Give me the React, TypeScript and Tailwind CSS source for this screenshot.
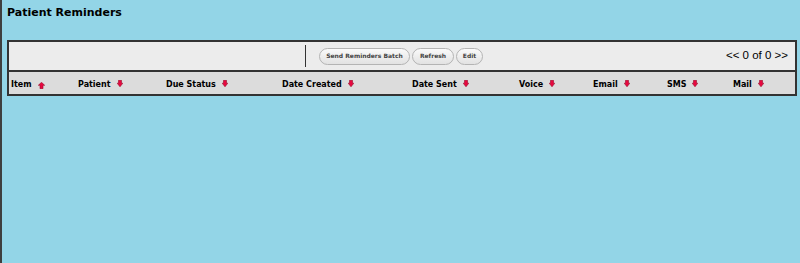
import React from 'react';

const columns = [
  { label: 'Item', width: 'w-[67px]', up: true },
  { label: 'Patient', width: 'w-[88px]' },
  { label: 'Due Status', width: 'w-[116px]' },
  { label: 'Date Created', width: 'w-[130px]' },
  { label: 'Date Sent', width: 'w-[107px]' },
  { label: 'Voice', width: 'w-[74px]' },
  { label: 'Email', width: 'w-[74px]' },
  { label: 'SMS', width: 'w-[66px]' },
  { label: 'Mail', width: 'w-[56px]' },
];

function SortArrow({ up }: { up?: boolean }) {
  if (up) {
    return (
      <svg width="7" height="7" viewBox="0 0 7 7" className="ml-[6px] mt-[2px] shrink-0">
        <polygon points="3.5,0.3 6.7,3.3 5,3.3 5,6.7 2,6.7 2,3.3 0.3,3.3" fill="#e8073f" stroke="#9a0b2b" strokeWidth="0.6" />
      </svg>
    );
  }
  return (
    <svg width="6" height="7" viewBox="0 0 6 7" className="ml-[6px] shrink-0">
      <polygon points="1.5,0.3 4.5,0.3 4.5,3.2 5.8,3.2 3,6.8 0.2,3.2 1.5,3.2" fill="#e8073f" stroke="#9a0b2b" strokeWidth="0.6" />
    </svg>
  );
}

function PillButton({ label, width }: { label: string; width: string }) {
  return (
    <button
      className={`${width} h-[17px] rounded-full border border-[#b4b4b4] bg-gradient-to-b from-[#fafafa] to-[#e2e2e2] text-[6px] font-bold text-[#444] leading-none`}
    >
      {label}
    </button>
  );
}

export default function App() {
  return (
    <div className="min-h-screen bg-[#93d5e7] border-l-2 border-[#3f3f3f] pl-[5px] font-['DejaVu_Sans',sans-serif]">
      {/* Title */}
      <div className="h-[40px] pt-[6px]">
        <h1 className="text-[11px] leading-[13px] font-bold text-black">Patient Reminders</h1>
      </div>

      <div className="w-[790px] border-2 border-[#333]">
        {/* Toolbar */}
        <div className="h-[28px] bg-[#ececec] flex items-center">
          <div className="w-[296px]" />
          <div className="w-px h-[22px] bg-[#333]" />
          <div className="ml-[13px] flex items-center gap-[2px]">
            <PillButton label="Send Reminders Batch" width="w-[91px]" />
            <PillButton label="Refresh" width="w-[42px]" />
            <PillButton label="Edit" width="w-[27px]" />
          </div>
          <div className="ml-auto pr-[7px] text-[11.5px] text-black font-['Liberation_Sans',Arial,sans-serif]">
            &lt;&lt; 0 of 0 &gt;&gt;
          </div>
        </div>

        {/* Column headers */}
        <div className="h-[22px] bg-[#dcdcdc] border-t-2 border-[#333] box-content flex pl-[2px] pt-0">
          {columns.map(col => (
            <div key={col.label} className={`${col.width} flex items-start pt-[8px]`}>
              <span className="text-[8px] leading-[10px] font-bold text-black whitespace-nowrap">{col.label}</span>
              <SortArrow up={col.up} />
            </div>
          ))}
        </div>
      </div>
    </div>
  );
}
